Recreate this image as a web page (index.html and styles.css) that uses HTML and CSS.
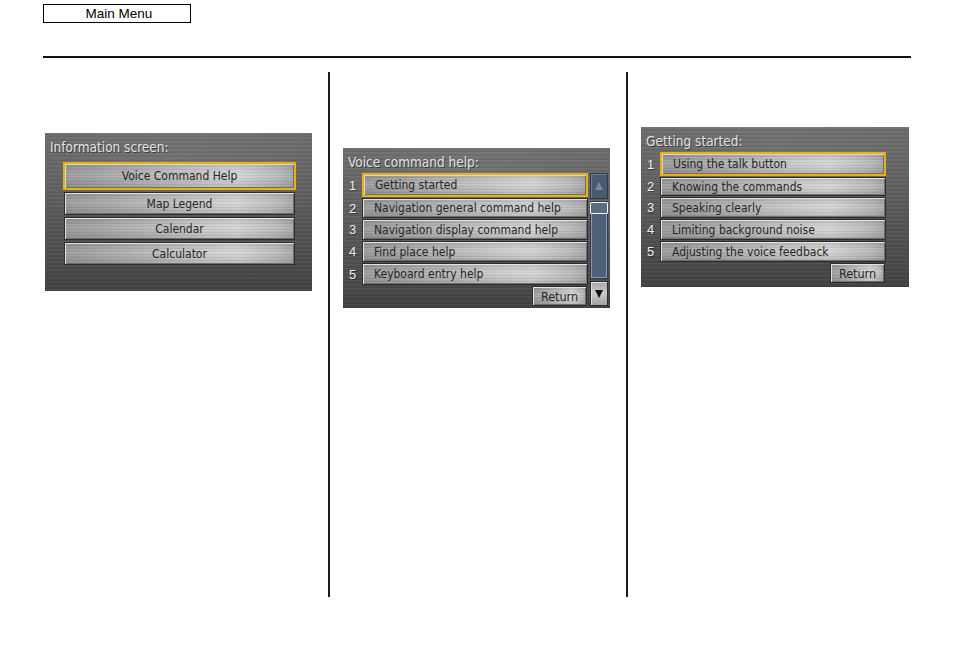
FILE: index.html
```html
<!DOCTYPE html>
<html>
<head>
<meta charset="utf-8">
<link rel="stylesheet" href="styles.css">
</head>
<body>
<div class="page">
  <div class="menu-btn">Main Menu</div>
  <div class="rule"></div>
  <div class="cols">
    <div class="col col1">
      <div class="panel p1">
        <div class="title">Information screen:</div>
        <div class="stack">
          <div class="btn center hl">Voice Command Help</div>
          <div class="btn center">Map Legend</div>
          <div class="btn center">Calendar</div>
          <div class="btn center">Calculator</div>
        </div>
      </div>
    </div>
    <div class="col col2">
      <div class="panel p2">
        <div class="title">Voice command help:</div>
        <div class="list l2">
          <div class="num">1</div><div class="btn hl">Getting started</div>
          <div class="num">2</div><div class="btn">Navigation general command help</div>
          <div class="num">3</div><div class="btn">Navigation display command help</div>
          <div class="num">4</div><div class="btn">Find place help</div>
          <div class="num">5</div><div class="btn">Keyboard entry help</div>
          <div class="num"></div><div class="ret-cell"><div class="btn ret">Return</div></div>
          <div class="scroll">
            <div class="sb-up"><span class="tri up"></span></div>
            <div class="sb-track"><div class="sb-thumb"></div></div>
            <div class="sb-down"><span class="tri down"></span></div>
          </div>
        </div>
      </div>
    </div>
    <div class="col col3">
      <div class="panel p3">
        <div class="title">Getting started:</div>
        <div class="list l3">
          <div class="num">1</div><div class="btn hl">Using the talk button</div>
          <div class="num">2</div><div class="btn">Knowing the commands</div>
          <div class="num">3</div><div class="btn">Speaking clearly</div>
          <div class="num">4</div><div class="btn">Limiting background noise</div>
          <div class="num">5</div><div class="btn">Adjusting the voice feedback</div>
          <div class="num"></div><div class="ret-cell"><div class="btn ret">Return</div></div>
        </div>
      </div>
    </div>
  </div>
</div>
</body>
</html>
```
FILE: styles.css
```css
html, body { margin: 0; padding: 0; background: #fff; }
body { width: 954px; height: 652px; overflow: hidden; font-family: "Liberation Sans", Arial, sans-serif; }
.page { padding-left: 43px; padding-top: 4px; }
.menu-btn {
  box-sizing: border-box; width: 148px; height: 19px;
  border: 1px solid #000; font-size: 13.5px; line-height: 17px;
  text-align: center; color: #000; padding-left: 4px;
}
.rule { width: 868px; height: 2px; background: #111; margin-top: 33px; }
.cols { display: flex; margin-top: 14px; height: 525px; }
.col { box-sizing: border-box; }
.col1 { width: 285px; padding-left: 2px; padding-top: 61px; }
.col2 { width: 298px; border-left: 2px solid #1a1a1a; padding-left: 13px; padding-top: 76px; }
.col3 { width: 285px; border-left: 2px solid #1a1a1a; padding-left: 13px; padding-top: 55px; }

.panel {
  box-sizing: border-box; height: 160px;
  background:
    repeating-linear-gradient(180deg, rgba(255,255,255,0.05) 0 1px, rgba(0,0,0,0) 1px 3px, rgba(0,0,0,0.07) 3px 4px),
    radial-gradient(ellipse 60% 40% at 50% 20%, rgba(255,255,255,0.08), rgba(255,255,255,0) 100%),
    linear-gradient(180deg, #6c6c6c 0%, #5c5c5c 45%, #4c4c4c 80%, #424242 100%);
  font-family: "DejaVu Sans Condensed", "Liberation Sans", sans-serif;
}
.p1 { width: 267px; height: 158px; }
.p2 { width: 267px; }
.p3 { width: 268px; }
.title {
  height: 25px; box-sizing: border-box; padding-left: 5px; padding-top: 6px;
  color: #e2e2e2; font-size: 13.5px; line-height: 16px;
  text-shadow: 1px 1px 0 rgba(0,0,0,0.45);
}
.p1 .title { height: 29px; padding-top: 6px; }

.btn {
  box-sizing: border-box;
  border: 1px solid #2c2c2c;
  box-shadow: inset 1px 1px 0 #e2e2e2, inset -1px -1px 0 #6e6e6e;
  background:
    repeating-linear-gradient(180deg, rgba(255,255,255,0.07) 0 1px, rgba(0,0,0,0) 1px 2px, rgba(0,0,0,0.05) 2px 3px),
    linear-gradient(180deg, rgba(0,0,0,0.10) 0%, rgba(255,255,255,0.05) 45%, rgba(0,0,0,0.12) 100%),
    linear-gradient(90deg, #9a9a9a 0%, #b2b2b2 30%, #cdcdcd 62%, #d6d6d6 75%, #bdbdbd 92%, #a8a8a8 100%);
  color: #262626; font-size: 12px;
  display: flex; align-items: center; padding-left: 11px;
  white-space: nowrap;
}
.btn.center { justify-content: center; padding-left: 0; font-size: 12px; }
.btn.hl {
  border: 2px solid #e8b10e;
  box-shadow: inset 1px 1px 0 #d6d6d6, inset -1px -1px 0 #6e6e6e;
}

.stack { display: flex; flex-direction: column; gap: 2px; margin-left: 18px; width: 233px; }
.stack .btn { height: 23px; margin: 0 1px; }
.stack .btn.hl { height: 28px; margin: 0; }

.list { display: grid; grid-template-columns: 19px 226px 2px 18px; row-gap: 1px; }
.l2 { grid-template-rows: 24px 20px 21px 21px 22px 20px; }
.l3 { grid-template-rows: 24px 19px 21px 21px 21px 20px; }
.list .btn { grid-column: 2; }
.num {
  grid-column: 1; color: #f0f0f0; font-size: 13px;
  display: flex; align-items: center; justify-content: center;
  font-family: "Liberation Sans", sans-serif;
  text-shadow: 1px 1px 0 rgba(0,0,0,0.4);
}
.ret-cell { grid-column: 2; display: flex; justify-content: flex-end; padding-right: 1px; }
.btn.ret { width: 55px; padding-left: 0; justify-content: center; font-size: 12.5px; }

.scroll {
  grid-column: 4; grid-row: 1 / 7; display: flex; flex-direction: column; gap: 2px;
}
.sb-up {
  height: 26px; box-sizing: border-box; background: #4b5b6f;
  border: 1px solid #2f3a48; box-shadow: inset 1px 1px 0 #6f7f92;
  display: flex; align-items: center; justify-content: center;
}
.sb-track {
  flex: 1; box-sizing: border-box; background: #4d6078;
  border: 1px solid #303c4c; box-shadow: inset 1px 1px 0 #8a98aa, inset -1px -1px 0 #8a98aa;
  position: relative;
}
.sb-thumb {
  position: absolute; left: -1px; right: -1px; top: 0; height: 12px;
  box-sizing: border-box; border: 1px solid #f4f4f4; border-radius: 1px;
  background: #5b6d82;
}
.sb-down {
  height: 25px; box-sizing: border-box;
  border: 1px solid #2c2c2c; box-shadow: inset 1px 1px 0 #e0e0e0;
  background: linear-gradient(180deg, #a8a8a8, #cacaca 50%, #a2a2a2);
  display: flex; align-items: center; justify-content: center;
}
.tri { width: 0; height: 0; border-left: 4px solid transparent; border-right: 4px solid transparent; }
.tri.up { border-bottom: 8px solid #7c8a9a; }
.tri.down { border-top: 8px solid #111; }
```
